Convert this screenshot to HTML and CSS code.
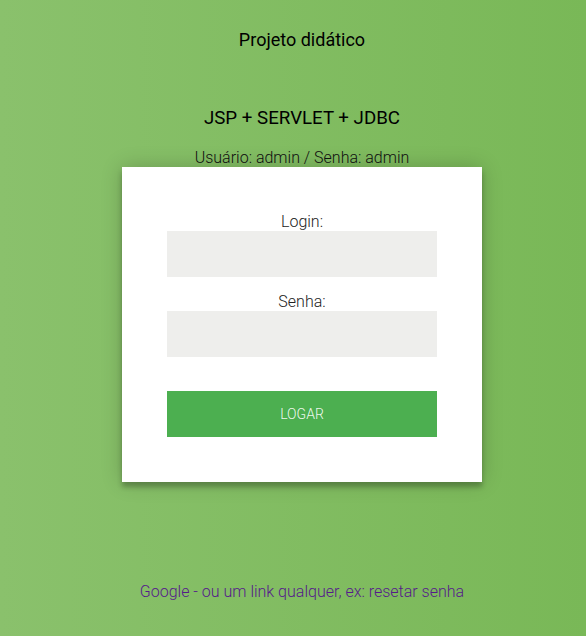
FILE: index.html
```html
<!DOCTYPE html>
<html lang="pt">
<head>
<meta charset="utf-8">
<title>Projeto didático</title>
<link rel="stylesheet" href="styles.css">
</head>
<body>
<div class="page">
  <h1 class="title">Projeto didático</h1>
  <h2 class="subtitle">JSP + SERVLET + JDBC</h2>
  <p class="hint">Usuário: admin / Senha: admin</p>
  <form class="card">
    <label class="label" for="login">Login:</label>
    <input class="field" id="login" type="text">
    <label class="label" for="senha">Senha:</label>
    <input class="field" id="senha" type="password">
    <button class="btn" type="button">Logar</button>
  </form>
  <a class="link" href="#">Google - ou um link qualquer, ex: resetar senha</a>
</div>
</body>
</html>
```
FILE: styles.css
```css
html, body {
  margin: 0;
  height: 100%;
}
body {
  background: linear-gradient(to left, #79b857, #8ac16c);
  font-family: Roboto, "Liberation Sans", sans-serif;
  color: #000;
}
.page {
  display: flex;
  flex-direction: column;
  align-items: center;
  padding-top: 29px;
  padding-left: 18px;
}
.title {
  margin: 0;
  font-size: 18px;
  line-height: 21px;
  font-weight: 400;
}
.subtitle {
  margin: 58px 0 0;
  font-size: 18.72px;
  line-height: 21px;
  font-weight: 400;
}
.hint {
  margin: 19px 0 0;
  font-size: 16px;
  line-height: 19px;
  font-weight: 300;
  color: #111;
}
.card {
  width: 360px;
  box-sizing: border-box;
  padding: 45px;
  background: #fff;
  display: flex;
  flex-direction: column;
  align-items: stretch;
  text-align: center;
  box-shadow: 0 0 20px 0 rgba(0,0,0,0.2), 0 5px 5px 0 rgba(0,0,0,0.24);
}
.label {
  font-size: 16px;
  line-height: 19px;
  font-weight: 300;
  color: #222;
}
.field {
  height: 46px;
  border: 0;
  margin: 0 0 15px;
  padding: 15px;
  box-sizing: border-box;
  background: #eeeeec;
  font-family: inherit;
  font-size: 14px;
  outline: none;
}
.btn {
  margin-top: 19px;
  height: 46px;
  border: 0;
  padding: 15px;
  background: #4caf50;
  color: rgba(255,255,255,0.92);
  font-family: inherit;
  font-size: 14px;
  line-height: 16px;
  font-weight: 300;
  text-transform: uppercase;
}
.link {
  margin-top: 100px;
  font-size: 16px;
  line-height: 19px;
  font-weight: 300;
  color: #551a8b;
  text-decoration: none;
}
```
